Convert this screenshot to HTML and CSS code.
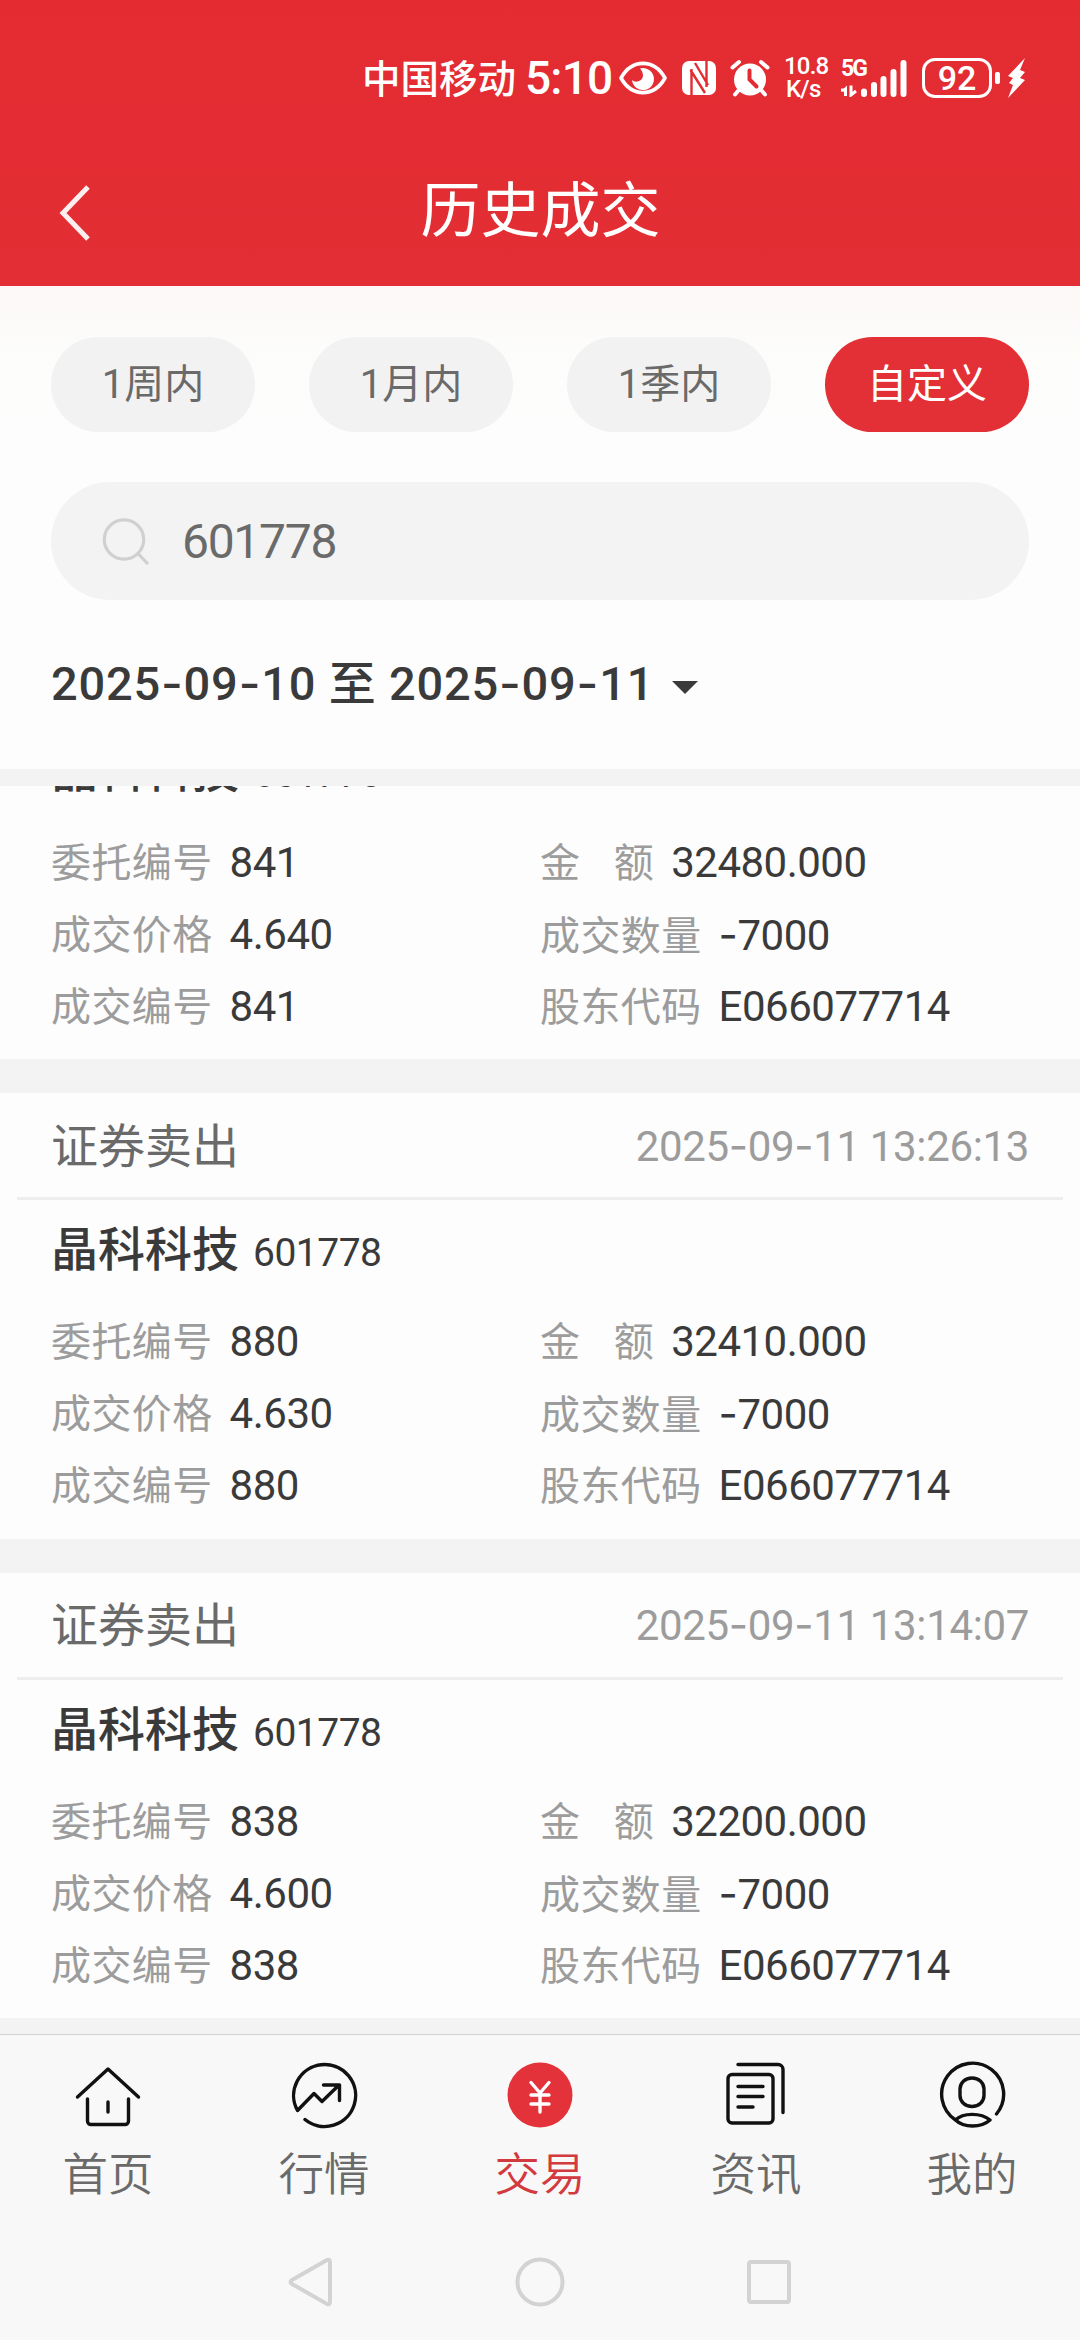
FILE: index.html
```html
<!DOCTYPE html>
<html lang="zh">
    <head>
        <meta charset="UTF-8" />
        <meta name="viewport" content="width=device-width, initial-scale=1.0" />
        <title>历史成交</title>
        <link rel="stylesheet" href="styles.css">
    </head>
    <body>
        <div class="page">
            <header class="top">
                <!-- 状态栏 -->
                <div class="status">
                    <span class="carrier">中国移动</span>
                    <span class="time">5:10</span>
                    <svg class="eye" width="48" height="34" viewBox="0 0 48 34">
                        <path d="M2 17C13-2.500 35-2.500 46 17C35 36.500 13 36.500 2 17Z" fill="none" stroke="#fff" stroke-width="3.600" stroke-linejoin="round" />
                        <path d="M21 7.500a11 11 0 1 1-8 11.500c3 3 10 2 11-4c0-3-1-5-3-7.500z" fill="#fff" />
                    </svg>
                    <svg class="nfc" width="34" height="34" viewBox="0 0 34 34">
                        <rect width="34" height="34" rx="7" fill="#fff" />
                        <path d="M9.500 34V8M13 2L26 24M8.500 9L23 32M24.500 0V26" fill="none" stroke="#e32c32" stroke-width="2.400" />
                    </svg>
                    <svg class="alarm" width="40" height="38" viewBox="0 0 40 38">
                        <circle cx="20" cy="20.500" r="16" fill="#fff" />
                        <path d="M2.500 8.500L9 3M37.500 8.500L31 3M8 32l-3 3.500M32 32l3 3.500" stroke="#fff" stroke-width="4" stroke-linecap="round" />
                        <path d="M19.500 11.500v9l7 7" fill="none" stroke="#e32c32" stroke-width="4" stroke-linecap="round" />
                    </svg>
                    <span class="speed"><span>10.8</span><span>K/s</span></span>
                    <span class="network">
                        <span class="net-type">5G</span>
                        <svg width="68" height="38" viewBox="0 0 68 38">
                            <path d="M0 31h4.500V37M10 26.500V36l5-4" fill="none" stroke="#fff" stroke-width="3" />
                            <path d="M0 32.500l6-6V32z" fill="#fff" />
                            <path d="M23 32.500v2.500M33 26v9M42.500 20v15M52.500 13v22M62.500 4v31" stroke="#fff" stroke-width="6" stroke-linecap="round" />
                        </svg>
                    </span>
                    <span class="battery">92</span>
                    <span class="nub"></span>
                    <svg class="bolt" width="19" height="40" viewBox="0 0 19 40">
                        <path d="M18 0L1 18l5 2-4 5 4 2-5 13L18 22l-5-2 5-6-5-2z" fill="#fff" />
                    </svg>
                </div>
                <div class="title-bar">
                    <svg class="back" width="34" height="60" viewBox="0 0 34 60">
                        <path d="M31 4L6 30L31 56" fill="none" stroke="#fff" stroke-opacity="0.920" stroke-width="5" />
                    </svg>
                    <h1>历史成交</h1>
                </div>
            </header>

            <!-- 筛选条件 -->
            <section class="filter">
                <div class="ranges">
                    <a href="javascript:;">1周内</a>
                    <a href="javascript:;">1月内</a>
                    <a href="javascript:;">1季内</a>
                    <a href="javascript:;" class="current">自定义</a>
                </div>
                <div class="search">
                    <svg width="48" height="48" viewBox="0 0 48 48">
                        <circle cx="22" cy="22.500" r="19.700" fill="none" stroke="#d0d0d0" stroke-width="3.200" />
                        <path d="M35.500 36L46 47" stroke="#d0d0d0" stroke-width="3.200" />
                    </svg>
                    <span>601778</span>
                </div>
                <div class="dates">
                    <span>2025<i>-</i>09<i>-</i>10 至 2025<i>-</i>09<i>-</i>11</span>
                    <b class="arrow"></b>
                </div>
            </section>

            <!-- 成交列表 -->
            <main class="list">
                <div class="card">
                    <div class="stock"><strong>晶科科技</strong><span>601778</span></div>
                    <ul class="info">
                        <li><label>委托编号</label><span>841</span></li>
                        <li><label>金&nbsp;&nbsp;&nbsp;额</label><span>32480.000</span></li>
                        <li><label>成交价格</label><span>4.640</span></li>
                        <li><label>成交数量</label><span><i>-</i>7000</span></li>
                        <li><label>成交编号</label><span>841</span></li>
                        <li><label>股东代码</label><span>E066077714</span></li>
                    </ul>
                </div>
                <div class="card">
                    <div class="card-head"><span>证券卖出</span><time>2025<i>-</i>09<i>-</i>11 13:26:13</time></div>
                    <div class="stock"><strong>晶科科技</strong><span>601778</span></div>
                    <ul class="info">
                        <li><label>委托编号</label><span>880</span></li>
                        <li><label>金&nbsp;&nbsp;&nbsp;额</label><span>32410.000</span></li>
                        <li><label>成交价格</label><span>4.630</span></li>
                        <li><label>成交数量</label><span><i>-</i>7000</span></li>
                        <li><label>成交编号</label><span>880</span></li>
                        <li><label>股东代码</label><span>E066077714</span></li>
                    </ul>
                </div>
                <div class="card">
                    <div class="card-head"><span>证券卖出</span><time>2025<i>-</i>09<i>-</i>11 13:14:07</time></div>
                    <div class="stock"><strong>晶科科技</strong><span>601778</span></div>
                    <ul class="info">
                        <li><label>委托编号</label><span>838</span></li>
                        <li><label>金&nbsp;&nbsp;&nbsp;额</label><span>32200.000</span></li>
                        <li><label>成交价格</label><span>4.600</span></li>
                        <li><label>成交数量</label><span><i>-</i>7000</span></li>
                        <li><label>成交编号</label><span>838</span></li>
                        <li><label>股东代码</label><span>E066077714</span></li>
                    </ul>
                </div>
            </main>

            <!-- 底部导航 -->
            <nav class="tabs">
                <a href="javascript:;">
                    <svg width="68" height="68" viewBox="0 0 68 68">
                        <path d="M3.500 36L34 8L64.500 36M13.500 38V60a3.500 3.500 0 0 0 3.500 3.500H51a3.500 3.500 0 0 0 3.500-3.500V38M34 41V51" />
                    </svg>
                    <span>首页</span>
                </a>
                <a href="javascript:;">
                    <svg width="68" height="68" viewBox="0 0 68 68">
                        <path d="M15 58.500A31 31 0 1 0 7.500 49.500L24 32.500L32 40.500L49 24M33.500 24H49.500V39.500" />
                    </svg>
                    <span>行情</span>
                </a>
                <a href="javascript:;" class="current">
                    <svg width="68" height="68" viewBox="0 0 68 68">
                        <circle cx="34" cy="34" r="32.500" />
                        <path d="M25 21.500L34 32L43 21.500M25 34H43M25 43H43M34 32V51" />
                    </svg>
                    <span>交易</span>
                </a>
                <a href="javascript:;">
                    <svg width="68" height="68" viewBox="0 0 68 68">
                        <rect x="6" y="13.500" width="45" height="48.500" rx="4" />
                        <path d="M16 3.500H56a5 5 0 0 1 5 5V51.500M16 25.500H41M16 35.500H41M16 46H31" />
                    </svg>
                    <span>资讯</span>
                </a>
                <a href="javascript:;">
                    <svg width="68" height="68" viewBox="0 0 68 68">
                        <path d="M17.500 59A31 31 0 1 1 58.500 53M17.500 59C25 51.500 43 51.500 52 59C43 67 26 67 17.500 59M34 17c7 0 12 5 12 11v6.500c0 6-5 11-12 11s-12-5-12-11V28c0-6 5-11 12-11z" />
                    </svg>
                    <span>我的</span>
                </a>
            </nav>
            <div class="system">
                <svg width="50" height="54" viewBox="0 0 50 54">
                    <path d="M41 5L6 25q-3 2 0 4L41 49q3 1 3-2V7q0-3-3-2z" />
                </svg>
                <svg width="50" height="54" viewBox="0 0 50 54">
                    <circle cx="25" cy="27" r="22.500" />
                </svg>
                <svg width="50" height="54" viewBox="0 0 50 54">
                    <rect x="5" y="7" width="40" height="40" rx="2" />
                </svg>
            </div>
        </div>
    </body>
</html>
```

FILE: styles.css
```css
* {
    margin: 0;
    padding: 0;
    box-sizing: border-box;
}

body {
    width: 1080px;
    font-family: Roboto, "Noto Sans CJK SC", sans-serif;
    color: #3a3a3a;
    background-color: #f8f8f8;
}

ul {
    list-style: none;
}

a {
    text-decoration: none;
    color: inherit;
}

svg {
    display: block;
    flex: none;
}

/* 数字之间的短横 */
i {
    font-family: Inter, sans-serif;
    font-style: normal;
}

.page {
    height: 2340px;
    display: flex;
    flex-direction: column;
    overflow: hidden;
}

.top {
    height: 286px;
    background: linear-gradient(#e42b32, #e22e34);
    color: #fff;
}

/* 状态栏 */
.status {
    height: 132px;
    padding: 24px 0 0 362px;
    display: flex;
    align-items: center;
    white-space: nowrap;
}

.carrier {
    width: 163px;
    margin-bottom: 5px;
    font-size: 38.5px;
    font-weight: 500;
}

.time {
    width: 94px;
    font-size: 46px;
    font-weight: 500;
    letter-spacing: -0.8px;
}

.nfc {
    margin-left: 15px;
}

.alarm {
    margin-left: 14px;
}

.speed {
    width: 56px;
    margin-left: 14px;
    margin-right: 1px;
    display: flex;
    flex-direction: column;
    font-size: 24px;
    line-height: 23px;
    font-weight: 500;
    letter-spacing: -0.8px;
}

.speed span:last-child {
    padding-left: 2px;
}

.network {
    position: relative;
    margin-right: 13px;
}

.net-type {
    position: absolute;
    top: 0;
    left: 0;
    font-size: 23px;
    line-height: 20px;
    font-weight: 700;
    letter-spacing: -2px;
}

.battery {
    width: 70px;
    height: 40px;
    border: 3px solid #fff;
    border-radius: 13px;
    font-size: 34px;
    line-height: 34px;
    font-weight: 500;
    text-align: center;
}

.nub {
    width: 5px;
    height: 12px;
    margin: 0 7px 0 3px;
    border-radius: 2px;
    background-color: #fff;
}

.title-bar {
    height: 154px;
    padding-left: 57px;
    display: flex;
    align-items: center;
}

.title-bar .back {
    margin-top: 8px;
}

.title-bar h1 {
    flex: 1;
    padding: 0 90px 0 0;
    margin-top: 6px;
    font-size: 60px;
    font-weight: 400;
    line-height: 80px;
    text-align: center;
}

/* 筛选条件 */
.filter {
    height: 500px;
    padding: 51px 51px 0;
    background: linear-gradient(#fdf8f8, #fcfcfb 60px, #fdfdfd 170px);
    border-bottom: 17px solid #f3f3f3;
}

.ranges {
    display: flex;
    justify-content: space-between;
}

.ranges a {
    width: 204px;
    height: 95px;
    border-radius: 48px;
    background-color: #f3f2f2;
    color: #6a6a6a;
    font-size: 40px;
    line-height: 95px;
    text-align: center;
}

.ranges .current {
    background-color: #e33036;
    color: #fff;
}

.search {
    height: 118px;
    margin-top: 50px;
    padding-left: 51px;
    border-radius: 59px;
    background-color: #f3f3f3;
    display: flex;
    align-items: center;
    gap: 32px;
    font-size: 48px;
    letter-spacing: -1.3px;
    color: #6a6a6a;
}

.dates {
    margin-top: 51px;
    display: flex;
    align-items: center;
    gap: 18px;
    font-size: 47px;
    font-weight: 500;
    line-height: 64px;
    letter-spacing: 0.8px;
    color: #3a3a3a;
}

.dates .arrow {
    margin-top: 8px;
    border: 13.5px solid transparent;
    border-top-color: #3a3a3a;
    border-bottom: none;
}

/* 成交列表 */
.list {
    height: 1248px;
    overflow: hidden;
    background-color: #f3f3f3;
}

.card {
    height: 445.5px;
    margin-bottom: 34px;
    background-color: #fdfdfd;
}

/* 第一张卡片已滚出一部分 */
.card:first-child {
    height: 338.5px;
    margin-top: -65.5px;
}

.card-head {
    height: 107px;
    margin: 0 17px;
    padding: 0 34px;
    border-bottom: 3px solid #eee;
    display: flex;
    justify-content: space-between;
    align-items: center;
    font-size: 47px;
    color: #6a6a6a;
}

.card-head span {
    margin-bottom: 6px;
}

.card-head time {
    font-size: 42px;
    letter-spacing: -0.35px;
    color: #9c9c9c;
}

.stock {
    height: 98px;
    margin-bottom: 7px;
    padding: 1px 0 0 51px;
    line-height: 98px;
}

.stock strong {
    margin-right: 14px;
    font-size: 47px;
    font-weight: 500;
}

.stock span {
    font-size: 39px;
    letter-spacing: -0.5px;
}

.info {
    padding-left: 51px;
    display: grid;
    grid-template-columns: 489px 1fr;
    grid-auto-rows: 72px;
}

.info li {
    display: flex;
    align-items: baseline;
    gap: 17px;
    font-size: 42px;
    line-height: 73px;
    letter-spacing: -0.5px;
}

.info label {
    font-size: 40px;
    letter-spacing: 0.4px;
    word-spacing: 0.8px;
    color: #9c9c9c;
}

/* 底部导航 */
.tabs {
    height: 186px;
    padding-top: 26px;
    border-top: 1px solid #d2d2d2;
    display: grid;
    grid-template-columns: repeat(5, 1fr);
    font-family: "Noto Sans CJK SC", sans-serif;
    font-size: 45.5px;
    font-weight: 350;
    line-height: 60px;
    color: #6a6a6a;
}

.tabs a {
    display: flex;
    flex-direction: column;
    align-items: center;
    gap: 12px;
}

.tabs svg {
    fill: none;
    stroke: #111;
    stroke-width: 3.4;
    stroke-linecap: round;
    stroke-linejoin: round;
}

.tabs .current {
    color: #d23a40;
}

.tabs .current circle {
    fill: #e33239;
    stroke: none;
}

.tabs .current path {
    stroke: #fff;
}

/* 系统按键 */
.system {
    height: 120px;
    padding-top: 35px;
    display: flex;
    justify-content: center;
    gap: 179px;
}

.system svg {
    fill: none;
    stroke: #d3d3d3;
    stroke-width: 4;
}
```
